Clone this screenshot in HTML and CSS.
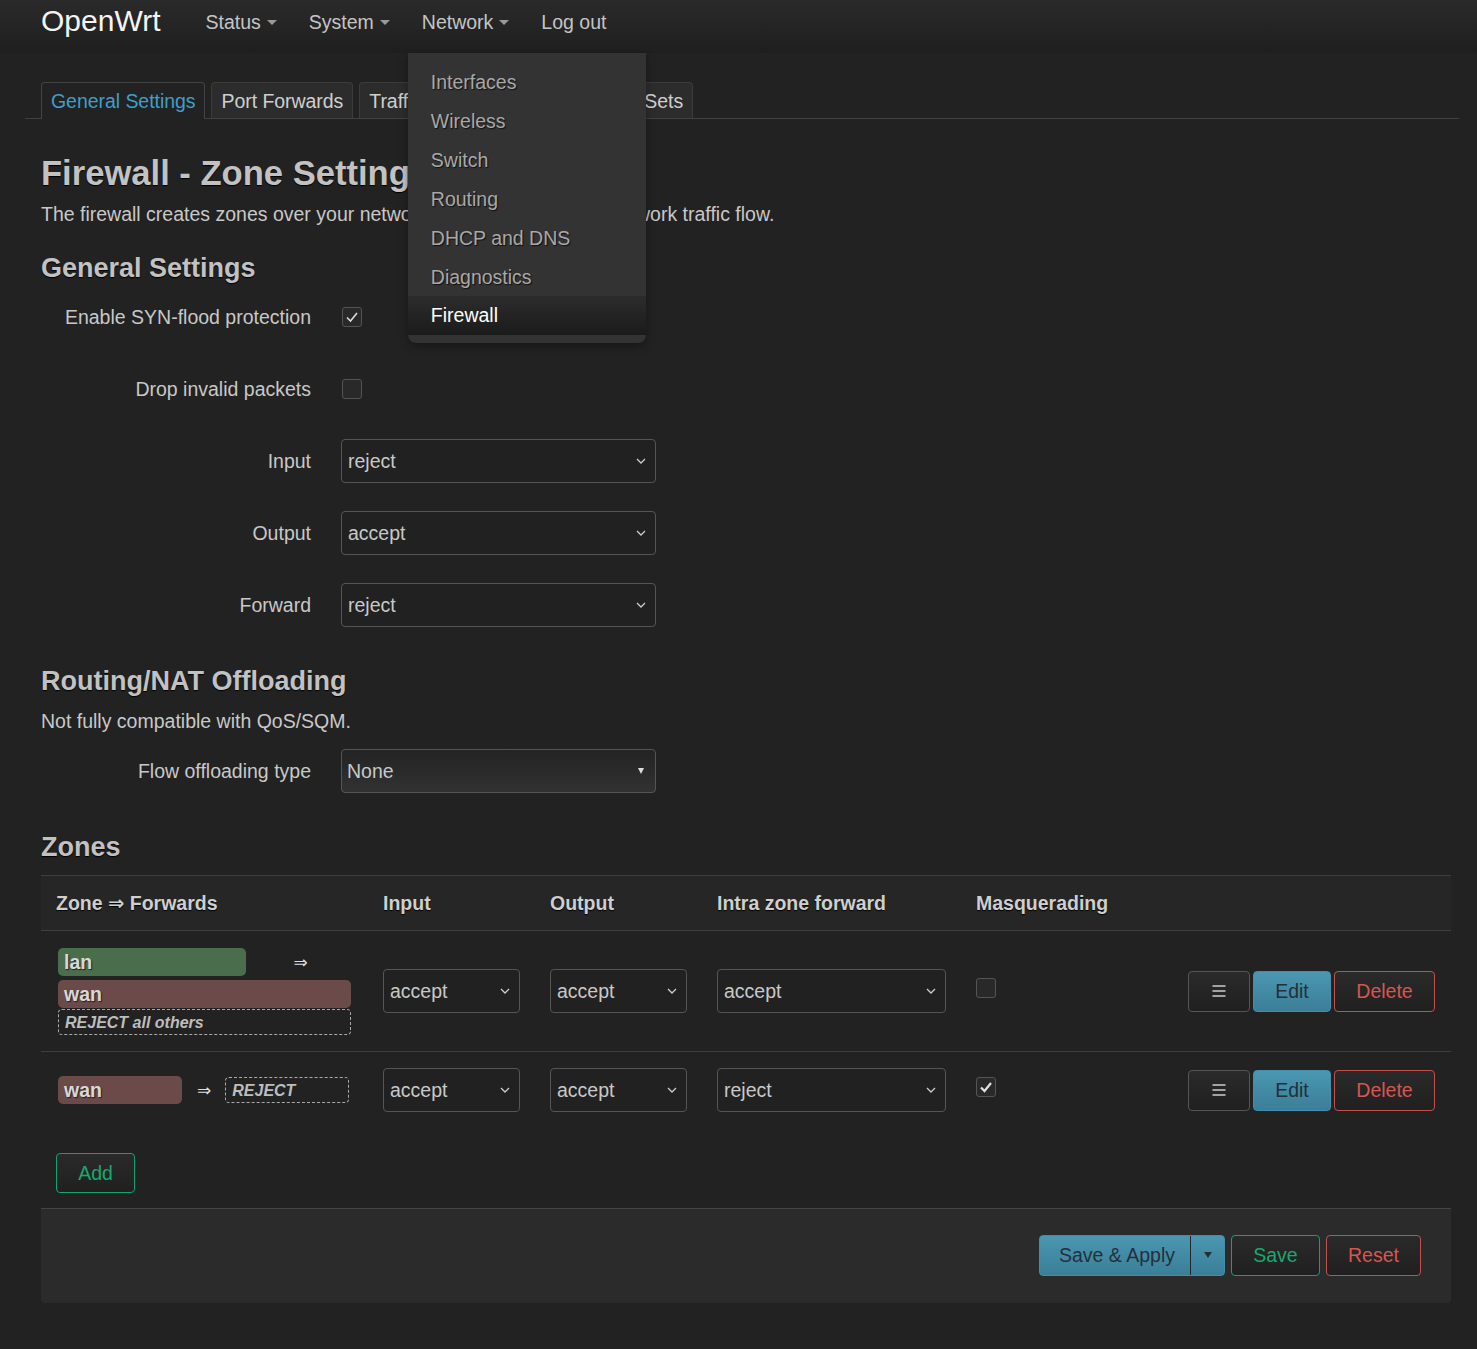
FILE: index.html
```html
<!DOCTYPE html>
<html lang="en">
<head>
<meta charset="utf-8">
<title>Firewall - Zone Settings - OpenWrt</title>
<link rel="stylesheet" href="styles.css">
</head>
<body>
<header class="topbar">
  <a class="brand">OpenWrt</a>
  <ul class="nav">
    <li class="nav-item"><span class="nav-link caret">Status</span></li>
    <li class="nav-item"><span class="nav-link caret">System</span></li>
    <li class="nav-item open">
      <span class="nav-link caret">Network</span>
      <ul class="dropdown">
        <li>Interfaces</li>
        <li>Wireless</li>
        <li>Switch</li>
        <li>Routing</li>
        <li>DHCP and DNS</li>
        <li>Diagnostics</li>
        <li class="active">Firewall</li>
      </ul>
    </li>
    <li class="nav-item"><span class="nav-link">Log out</span></li>
  </ul>
</header>

<main class="container">
  <ul class="tabs">
    <li class="tab active">General Settings</li>
    <li class="tab">Port Forwards</li>
    <li class="tab">Traffic Rules</li>
    <li class="tab">NAT Rules</li>
    <li class="tab">IP Sets</li>
  </ul>

  <h2 class="page-title">Firewall - Zone Settings</h2>
  <p class="desc first">The firewall creates zones over your network interfaces to control network traffic flow.</p>

  <h3 class="section">General Settings</h3>
  <div class="form">
    <div class="row">
      <label class="lbl">Enable SYN-flood protection</label>
      <span class="cbox checked"><svg width="14" height="12" viewBox="0 0 14 12"><polyline points="2,6.5 5.5,10 12,2" fill="none" stroke="#ddd" stroke-width="1.6"/></svg></span>
    </div>
    <div class="row">
      <label class="lbl">Drop invalid packets</label>
      <span class="cbox"></span>
    </div>
    <div class="row">
      <label class="lbl">Input</label>
      <div class="select wide"><span>reject</span><svg class="chev" width="10" height="6" viewBox="0 0 10 6"><polyline points="1,1 5,5 9,1" fill="none" stroke="#ccc" stroke-width="1.3"/></svg></div>
    </div>
    <div class="row">
      <label class="lbl">Output</label>
      <div class="select wide"><span>accept</span><svg class="chev" width="10" height="6" viewBox="0 0 10 6"><polyline points="1,1 5,5 9,1" fill="none" stroke="#ccc" stroke-width="1.3"/></svg></div>
    </div>
    <div class="row">
      <label class="lbl">Forward</label>
      <div class="select wide"><span>reject</span><svg class="chev" width="10" height="6" viewBox="0 0 10 6"><polyline points="1,1 5,5 9,1" fill="none" stroke="#ccc" stroke-width="1.3"/></svg></div>
    </div>
  </div>

  <h3 class="section sec2">Routing/NAT Offloading</h3>
  <p class="desc second">Not fully compatible with QoS/SQM.</p>
  <div class="form form2">
    <div class="row">
      <label class="lbl">Flow offloading type</label>
      <div class="select wide grad"><span>None</span><span class="tri"></span></div>
    </div>
  </div>

  <h3 class="section sec3">Zones</h3>
  <div class="table">
    <div class="tr th">
      <div class="td">Zone ⇒ Forwards</div>
      <div class="td">Input</div>
      <div class="td">Output</div>
      <div class="td">Intra zone forward</div>
      <div class="td">Masquerading</div>
      <div class="td"></div>
    </div>
    <div class="tr r1">
      <div class="td zone">
        <div class="zline"><span class="badge lan w188">lan</span><span class="arrow center">⇒</span></div>
        <span class="badge wan">wan</span>
        <span class="dash">REJECT all others</span>
      </div>
      <div class="td"><div class="select sm"><span>accept</span><svg class="chev" width="10" height="6" viewBox="0 0 10 6"><polyline points="1,1 5,5 9,1" fill="none" stroke="#ccc" stroke-width="1.3"/></svg></div></div>
      <div class="td"><div class="select sm"><span>accept</span><svg class="chev" width="10" height="6" viewBox="0 0 10 6"><polyline points="1,1 5,5 9,1" fill="none" stroke="#ccc" stroke-width="1.3"/></svg></div></div>
      <div class="td"><div class="select md"><span>accept</span><svg class="chev" width="10" height="6" viewBox="0 0 10 6"><polyline points="1,1 5,5 9,1" fill="none" stroke="#ccc" stroke-width="1.3"/></svg></div></div>
      <div class="td cbcell"><span class="cbox up"></span></div>
      <div class="td actions">
        <span class="btn menu"><svg width="16" height="14" viewBox="0 0 16 14"><path d="M1.5 2h13M1.5 7h13M1.5 12h13" stroke="#ccc" stroke-width="1.5"/></svg></span>
        <span class="btn edit">Edit</span>
        <span class="btn del">Delete</span>
      </div>
    </div>
    <div class="tr r2">
      <div class="td zone">
        <div class="zline"><span class="badge wan w124">wan</span><span class="arrow">⇒</span><span class="dash w124">REJECT</span></div>
      </div>
      <div class="td"><div class="select sm"><span>accept</span><svg class="chev" width="10" height="6" viewBox="0 0 10 6"><polyline points="1,1 5,5 9,1" fill="none" stroke="#ccc" stroke-width="1.3"/></svg></div></div>
      <div class="td"><div class="select sm"><span>accept</span><svg class="chev" width="10" height="6" viewBox="0 0 10 6"><polyline points="1,1 5,5 9,1" fill="none" stroke="#ccc" stroke-width="1.3"/></svg></div></div>
      <div class="td"><div class="select md"><span>reject</span><svg class="chev" width="10" height="6" viewBox="0 0 10 6"><polyline points="1,1 5,5 9,1" fill="none" stroke="#ccc" stroke-width="1.3"/></svg></div></div>
      <div class="td cbcell"><span class="cbox checked up"><svg width="14" height="12" viewBox="0 0 14 12"><polyline points="2,6.5 5.5,10 12,2" fill="none" stroke="#e0e0e0" stroke-width="2.2"/></svg></span></div>
      <div class="td actions">
        <span class="btn menu"><svg width="16" height="14" viewBox="0 0 16 14"><path d="M1.5 2h13M1.5 7h13M1.5 12h13" stroke="#ccc" stroke-width="1.5"/></svg></span>
        <span class="btn edit">Edit</span>
        <span class="btn del">Delete</span>
      </div>
    </div>
  </div>

  <div class="add-wrap"><span class="btn add">Add</span></div>

  <div class="actionbar">
    <div class="split">
      <span class="split-main">Save &amp; Apply</span>
      <span class="split-caret"></span>
    </div>
    <span class="btn save">Save</span>
    <span class="btn reset">Reset</span>
  </div>
</main>
</body>
</html>
```

FILE: styles.css
```css
html, body {
  margin: 0;
  padding: 0;
  background: #222;
}
body {
  font-family: "Liberation Sans", Arial, "DejaVu Sans", sans-serif;
  font-size: 19.5px;
  color: #c8c8c8;
  min-height: 1349px;
}

/* ---------- header ---------- */
.topbar {
  height: 53px;
  display: flex;
  align-items: flex-start;
  padding-left: 41px;
  background: linear-gradient(to bottom, #2a2a2a, #1f1f1f);
  position: relative;
  z-index: 5;
}
.brand {
  font-size: 30px;
  line-height: 42px;
  color: #f4f4f4;
  margin-right: 29px;
}
.nav {
  list-style: none;
  margin: 0;
  padding: 0;
  display: flex;
}
.nav-item {
  position: relative;
  padding: 0 16px;
  line-height: 44px;
  color: #c4c4c4;
}
.nav-link.caret::after {
  content: "";
  display: inline-block;
  margin-left: 6px;
  vertical-align: 4px;
  border-left: 5px solid transparent;
  border-right: 5px solid transparent;
  border-top: 5px solid #999;
}
.dropdown {
  position: absolute;
  left: 2px;
  top: 53px;
  width: 238px;
  margin: 0;
  padding: 10px 0 8px;
  list-style: none;
  background: #333;
  border-radius: 0 0 8px 8px;
  box-shadow: 0 3px 8px rgba(0,0,0,0.35);
}
.dropdown li {
  height: 39px;
  line-height: 39px;
  padding-left: 23px;
  color: #a8a8a8;
  text-shadow: 1px 1px 1px #111;
}
.dropdown li.active {
  color: #fff;
  background: linear-gradient(to bottom, #2c2c2c, #1b1b1b);
  text-shadow: none;
  margin-top: -1px;
}

/* ---------- container ---------- */
.container {
  width: 1410px;
  padding-left: 41px;
}

.tabs {
  list-style: none;
  display: flex;
  gap: 6px;
  margin: 29px -8px 0 -16px;
  padding: 0 0 0 16px;
  border-bottom: 1px solid #404040;
}
.tab {
  height: 35px;
  line-height: 36px;
  padding: 0 9px;
  border: 1px solid #3c3c3c;
  border-bottom: none;
  border-radius: 4px 4px 0 0;
  background: #2c2c2c;
  color: #cfcfcf;
  letter-spacing: -0.05px;
}
.tab.active {
  background: #222;
  color: #3f9fc6;
  border-color: #444;
  height: 36px;
  margin-bottom: -1px;
}

.page-title {
  font-size: 34.6px;
  line-height: 40px;
  font-weight: bold;
  margin: 34px 0 0;
  color: #c2c2c2;
  text-shadow: 0 1px 1px #000;
}
.desc {
  margin: 0;
  line-height: 26px;
}
.desc.first { margin-top: 8px; }
.desc.second { margin-top: 12px; }

.section {
  font-size: 27px;
  line-height: 30px;
  font-weight: bold;
  color: #c2c2c2;
  text-shadow: 0 1px 1px #000;
  margin: 26px 0 0;
}
.section.sec2 { margin-top: 39px; }
.section.sec3 { margin-top: 39px; }

.form {
  margin-top: 12px;
  display: flex;
  flex-direction: column;
  gap: 28px;
}
.form2 { margin-top: 15px; }
.row {
  display: flex;
  align-items: center;
  height: 44px;
  gap: 30px;
}
.lbl {
  width: 270px;
  text-align: right;
  color: #c8c8c8;
}

.cbox {
  box-sizing: border-box;
  width: 20px;
  height: 20px;
  margin-left: 1px;
  border: 1px solid #555;
  border-radius: 3px;
  background: #292929;
  display: inline-flex;
  align-items: center;
  justify-content: center;
}
.cbcell {
  display: flex;
  align-items: center;
}
.cbox.up { margin-top: -7px; margin-left: 0; }

.select {
  box-sizing: border-box;
  height: 44px;
  border: 1px solid #555;
  border-radius: 4px;
  background: #212121;
  color: #c8c8c8;
  display: flex;
  align-items: center;
  justify-content: space-between;
  padding: 0 9px 0 6px;
}
.select.wide { width: 315px; }
.select.sm { width: 137px; }
.select.md { width: 229px; }
.select.grad {
  background: linear-gradient(to bottom, #232323, #323232);
  padding-right: 11px;
  padding-left: 5px;
}
.tri {
  width: 0;
  height: 0;
  border-left: 3.5px solid transparent;
  border-right: 3.5px solid transparent;
  border-top: 6px solid #ddd;
}

/* ---------- table ---------- */
.table {
  margin-top: 13px;
  width: 1410px;
}
.tr {
  display: grid;
  grid-template-columns: 327px 167px 167px 259px 1fr 290px;
  align-items: center;
  border-bottom: 1px solid #3e3e3e;
}
.tr.th {
  height: 54px;
  border-top: 1px solid #3e3e3e;
  background: #262626;
  font-weight: bold;
  color: #cfcfcf;
  text-shadow: 0 1px 1px #000;
}
.td { padding-left: 15px; }
.tr.r1 { height: 120px; }
.tr.r2 { height: 76px; border-bottom: none; }

.td.zone {
  padding-left: 17px;
  padding-right: 17px;
  display: flex;
  flex-direction: column;
  gap: 4px;
}
.zline {
  display: flex;
  align-items: center;
}
.badge {
  box-sizing: border-box;
  height: 28px;
  line-height: 29px;
  padding-left: 6px;
  border-radius: 5px;
  font-weight: bold;
  color: #d8d8d8;
  text-shadow: 1px 1px 1px #222;
}
.badge.lan { background: #4a6d4c; }
.badge.wan { background: #6b4a4a; }
.w188 { width: 188px; }
.w124 { width: 124px; }
.arrow {
  font-family: "DejaVu Sans", sans-serif;
  font-size: 17px;
  color: #ddd;
  margin: 0 14px 0 15px;
}
.arrow.center {
  flex: 1;
  text-align: center;
  margin: 0 0 0 4px;
}
.dash {
  box-sizing: border-box;
  height: 26px;
  line-height: 25px;
  margin-top: -3px;
  border: 1px dashed #aaa;
  border-radius: 4px;
  padding-left: 6px;
  font-size: 16px;
  font-weight: bold;
  font-style: italic;
  color: #bdbdbd;
}
.zline .dash { margin-top: 0; height: 26px; }

.actions {
  display: flex;
  justify-content: flex-end;
  gap: 3px;
  padding-right: 16px;
}
.btn {
  box-sizing: border-box;
  height: 41px;
  display: inline-flex;
  align-items: center;
  justify-content: center;
  border-radius: 4px;
  border: 1px solid #555;
  background: linear-gradient(to bottom, #2a2a2a, #202020);
  color: #ccc;
}
.btn.menu { width: 62px; }
.btn.edit {
  width: 78px;
  background: linear-gradient(to bottom, #4b97b2, #3b7e97);
  border-color: #4090ad;
  color: #22313a;
}
.btn.del {
  width: 101px;
  border-color: #c2504c;
  color: #d85550;
}

.add-wrap { margin-top: 25px; padding-left: 15px; }
.btn.add {
  width: 79px;
  height: 40px;
  border-color: #12a36c;
  color: #17a870;
}

.actionbar {
  margin-top: 15px;
  height: 95px;
  box-sizing: border-box;
  border-top: 1px solid #444;
  background: #2b2b2b;
  border-radius: 0 0 4px 4px;
  display: flex;
  align-items: center;
  justify-content: flex-end;
  gap: 6px;
  padding-right: 30px;
  padding-bottom: 2px;
}
.split {
  display: flex;
  height: 41px;
  width: 186px;
  box-sizing: border-box;
  border: 1px solid #4090ad;
  border-radius: 4px;
  background: linear-gradient(to bottom, #4b97b2, #3b7e97);
  color: #22313a;
}
.split-main {
  width: 146px;
  display: flex;
  align-items: center;
  justify-content: center;
  border-right: 1px solid #1f2a2e;
  padding-left: 4px;
}
.split-caret {
  flex: 1;
  display: flex;
  align-items: center;
  justify-content: center;
}
.split-caret::after {
  content: "";
  border-left: 4px solid transparent;
  border-right: 4px solid transparent;
  border-top: 6px solid #22313a;
}
.btn.save {
  width: 89px;
  border-color: #12a36c;
  color: #17a870;
}
.btn.reset {
  width: 95px;
  border-color: #c2504c;
  color: #d85550;
}
```
